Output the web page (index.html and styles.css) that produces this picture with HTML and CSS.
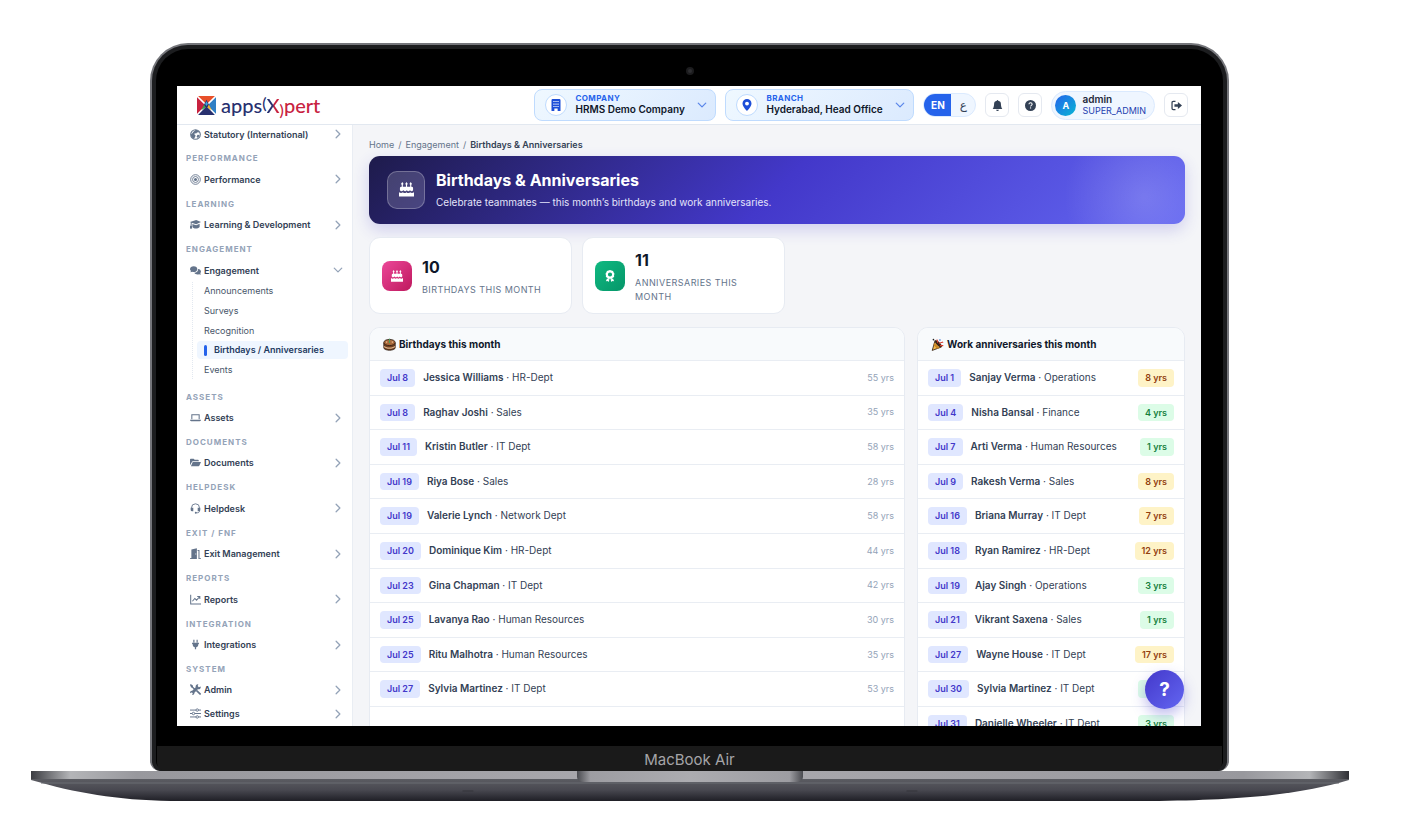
FILE: index.html
```html
<!DOCTYPE html>
<html lang="en">
<head>
    <meta charset="UTF-8">
    <meta name="viewport" content="width=device-width, initial-scale=1.0">
    <title>Birthdays &amp; Anniversaries</title>
    <link rel="stylesheet" href="styles.css">
</head>
<body>
    <svg class="sprite" aria-hidden="true">
        <symbol id="chevron" viewBox="0 0 16 16"><path d="M5 2l6 6-6 6" fill="none" stroke="currentColor" stroke-width="2" stroke-linecap="round" stroke-linejoin="round"/></symbol>
        <symbol id="cake" viewBox="0 0 16 16"><path d="M3.500 0l.9 1.400a.9.9 0 0 1-.3 1.500V5h3.300V2.900a.9.9 0 0 1-.3-1.500L8 0l.9 1.400a.9.9 0 0 1-.3 1.500V5h3.300V2.900a.9.9 0 0 1-.3-1.500l.9-1.400.9 1.400a.9.9 0 0 1-.3 1.500V5h.400a1.500 1.500 0 0 1 1.500 1.500v2.300c-1 1.400-2 1.400-3.300 0-1.200 1.400-2.200 1.400-3.400 0-1.200 1.400-2.200 1.400-3.500 0C3 10.200 2 10.200 1 8.800V6.500A1.500 1.500 0 0 1 2.500 5h.400V2.900a.9.9 0 0 1-.3-1.500z"/><path d="M0 15.500v-4.700c1.500 1.200 3 1.100 4.200 0 1.300 1.200 2.500 1.200 3.800 0 1.300 1.200 2.500 1.200 3.800 0 1.200 1.100 2.700 1.200 4.200 0v4.700z"/></symbol>
        <symbol id="award" viewBox="0 0 16 16"><path fill-rule="evenodd" d="M8 0l2 .8 2.100.5.8 2L14 5l-.6 2 .1 2.200-1.900 1.100L10.200 12 8 11.800 5.800 12l-1.400-1.700-1.900-1.100.1-2.200L2 5l1.100-1.700.8-2L6 .8zm0 3.200a2.800 2.800 0 1 0 0 5.600 2.800 2.800 0 0 0 0-5.600z"/><path d="M4 11.200L2.500 15l2.200-.3L6 16l1.400-3.200zM12 11.200l1.500 3.800-2.200-.3L10 16l-1.400-3.200z"/></symbol>
        <symbol id="globe" viewBox="0 0 16 16"><circle cx="8" cy="8" r="7" fill="none" stroke="currentColor" stroke-width="1.600"/><path d="M8 1.500c2-.3 4 .8 5.200 2.200L12 5.500l-1.500-.6L9 6.500l-2-.3-.8 1.600L8 9l-.5 2.500L5.500 14C3 13 1.300 11 1.300 8L3 6.500 5 4zM11 8.500l3 .2-1.500 3.300-2 .8-.9-2z"/></symbol>
        <symbol id="target" viewBox="0 0 16 16"><g fill="none" stroke="currentColor" stroke-width="1.300"><circle cx="8" cy="8" r="7"/><circle cx="8" cy="8" r="4.300"/></g><circle cx="8" cy="8" r="2.200"/></symbol>
        <symbol id="mortarboard" viewBox="0 0 16 16"><path d="M9 1.500l7 3-7 3.200-6.500-2.300-.2 4.600H.8L1.200 5 0 4.500z"/><path d="M3.500 7.200L9 9.200l5-2.300v4.600c-3 3-8 3-10.500 0z"/><path d="M0 10h3v4H0z"/></symbol>
        <symbol id="chat" viewBox="0 0 18 16"><path d="M6 1c3.500 0 6 2.200 6 4.800S9.500 10.500 6 10.500c-.8 0-1.600-.1-2.300-.4L.8 11l.8-2.500A4.300 4.300 0 0 1 0 5.800C0 3.200 2.500 1 6 1z"/><path d="M13.200 5.500c2.800.2 4.800 2 4.800 4.300 0 1-.4 1.900-1.100 2.600l.8 2.600-2.900-.9c-3 1-6.600 0-7.800-2.400 3.800.1 6.500-2.600 6.200-6.200z"/></symbol>
        <symbol id="laptop" viewBox="0 0 18 16"><path d="M3 11V3.500h12V11" fill="none" stroke="currentColor" stroke-width="1.700"/><path d="M0 11.800h18c0 1.400-.8 2.200-2 2.200H2c-1.200 0-2-.8-2-2.200z"/></symbol>
        <symbol id="folder" viewBox="0 0 18 16"><path d="M0 12.500V3.200C0 2.400.6 2 1.200 2H6l1.600 1.700H13c.9 0 1.400.5 1.400 1.300v1H4.600c-.7 0-1.200.4-1.500 1z"/><path d="M4.500 7H18l-2.800 6.200c-.2.500-.6.800-1.200.8H1.500z"/></symbol>
        <symbol id="headset" viewBox="0 0 16 16"><path d="M2.200 9V7a5.800 5.800 0 0 1 11.600 0v4.500c0 1.700-1.200 2.700-2.800 2.700H8.500" fill="none" stroke="currentColor" stroke-width="1.300"/><path d="M1 7h3.800v5H3a2 2 0 0 1-2-2zM11.200 7H15v3a2 2 0 0 1-2 2h-1.800z"/><circle cx="8.300" cy="14.200" r="1.300"/></symbol>
        <symbol id="door" viewBox="0 0 16 16"><path fill-rule="evenodd" d="M2 2l8-1.800V16H1v-1.200h1zm5.800 6v1.500H9V8z"/><path d="M11 3h2.800v11.800H16V16h-3.700V4.300H11z"/><path d="M0 14.800h3V16H0z"/></symbol>
        <symbol id="graph" viewBox="0 0 16 16"><path d="M1 1v13.500h15M3.500 10.500L7 6.500l2.500 2.500L14 4M10.500 3.500h3.800v3.800" fill="none" stroke="currentColor" stroke-width="1.500"/></symbol>
        <symbol id="plug" viewBox="0 0 16 16"><path d="M4.800 1h1.700v4H4.800zM9.500 1h1.700v4H9.500zM3 5.500h10v1.600h-.8c0 2.600-1.200 4.500-3.300 5V15H7.100v-2.900c-2.100-.5-3.300-2.400-3.300-5H3z"/></symbol>
        <symbol id="tools" viewBox="0 0 16 16"><path d="M1 0l3.200 2.200.2 1.800 3.100 3L6 8.500 3 5.500 1.700 5 0 1.500zM10 8.500l5.500 5a1.300 1.300 0 0 1-1.800 1.900L8.500 10z"/><path d="M15.500 3.800l-2.700.8-1.600-1.600.9-2.700C9.500-.3 7.600 2 8.300 4.600L3.200 9.800C1.200 9.500-.3 11.200.1 13.300l1.700-1 1.800.5.400 1.700-1.300 1.300c2.300.5 4-1.200 3.700-3.200l5-5c2.600.8 4.800-1.200 4.100-3.800z"/></symbol>
        <symbol id="sliders" viewBox="0 0 16 16"><path d="M0 3h16M0 8h16M0 13h16" stroke="currentColor" stroke-width="1.400"/><g fill="#fff" stroke="currentColor" stroke-width="1.300"><circle cx="10.500" cy="3" r="1.800"/><circle cx="5" cy="8" r="1.800"/><circle cx="10.500" cy="13" r="1.800"/></g></symbol>
        <symbol id="building" viewBox="0 0 16 16"><path fill-rule="evenodd" d="M3.500 0h9A1.500 1.500 0 0 1 14 1.500V16h-3.800v-3.500H5.800V16H2V1.500A1.500 1.500 0 0 1 3.500 0zM4.500 2.500v1.600h1.600V2.500zm2.700 0v1.600h1.600V2.500zm2.700 0v1.600h1.600V2.500zM4.500 6v1.600h1.600V6zm2.700 0v1.600h1.600V6zm2.700 0v1.600h1.600V6zM4.500 9.300v1.500h1.600V9.300zm2.700 0v1.500h1.600V9.300zm2.700 0v1.500h1.600V9.300z"/></symbol>
        <symbol id="pin" viewBox="0 0 16 16"><path fill-rule="evenodd" d="M8 16s6-5.700 6-10A6 6 0 0 0 2 6c0 4.300 6 10 6 10zM8 8.700a2.600 2.600 0 1 1 0-5.200 2.600 2.600 0 0 1 0 5.200z"/></symbol>
        <symbol id="bell" viewBox="0 0 16 16"><path d="M8 16a2 2 0 0 0 2-2H6a2 2 0 0 0 2 2zM9 1.100a1 1 0 1 0-2 0A5 5 0 0 0 3 6c0 1.100-.5 5.500-2 7h14c-1.500-1.500-2-5.900-2-7a5 5 0 0 0-4-4.900z"/></symbol>
        <symbol id="help" viewBox="0 0 16 16"><circle cx="8" cy="8" r="8"/><path d="M5.800 6.200c0-1.400 1-2.200 2.300-2.200s2.300.8 2.300 2c0 1.700-2.200 1.700-2.200 3.300" fill="none" stroke="#fff" stroke-width="1.500"/><circle cx="8.100" cy="11.500" r="1" fill="#fff"/></symbol>
        <symbol id="logout" viewBox="0 0 16 16"><path d="M6.500 2H3.200C2 2 1.500 2.600 1.500 3.600v8.800c0 1 .5 1.600 1.700 1.600h3.300" fill="none" stroke="currentColor" stroke-width="1.800"/><path d="M5 6.300h5V2.800L16 8l-6 5.200V9.700H5z"/></symbol>
    </svg>

    <div class="laptop">
        <div class="lid">
            <span class="camera"></span>
            <div class="screen">
                <header class="topbar">
                    <a class="brand" href="#" aria-label="apps(X)pert">
                        <svg class="brand-mark" viewBox="0 0 20 20" aria-hidden="true">
                            <path d="M1 0h18l-9 9z" fill="#e8502a"/>
                            <path d="M0 1l9 9-9 9z" fill="#c8223f"/>
                            <path d="M20 1v18l-9-9z" fill="#2f7fc4"/>
                            <path d="M10 10l9 10H1z" fill="#28306f"/>
                            <path d="M0 0l20 20M20 0L0 20" stroke="#fff" stroke-width="1.200"/>
                            <path d="M10 4l3 6-3 3-3-3z" fill="#28306f"/>
                            <path d="M10 5.500l1.500 3-1.500 2-1.500-2z" fill="#3ba7dd"/>
                            <path d="M7.500 9l1.500 3-4.500 3z" fill="#35a352"/>
                            <path d="M12.500 9L11 12l4.500 3z" fill="#f3b229"/>
                        </svg>
                        <span class="brand-name">apps<span class="paren-up">(</span><span class="brand-x">X</span><span class="paren-down">)</span><span class="brand-red">pert</span></span>
                    </a>
                    <div class="tools">
                        <div class="picker">
                            <span class="picker-icon"><svg><use href="#building"/></svg></span>
                            <div class="picker-text">
                                <label for="company">Company</label>
                                <select id="company"><option>HRMS Demo Company</option></select>
                            </div>
                            <svg class="picker-arrow"><use href="#chevron"/></svg>
                        </div>
                        <div class="picker">
                            <span class="picker-icon"><svg><use href="#pin"/></svg></span>
                            <div class="picker-text">
                                <label for="branch">Branch</label>
                                <select id="branch"><option>Hyderabad, Head Office</option></select>
                            </div>
                            <svg class="picker-arrow"><use href="#chevron"/></svg>
                        </div>
                        <div class="lang">
                            <button class="active" type="button">EN</button>
                            <button class="arabic" type="button" lang="ar">ع</button>
                        </div>
                        <button class="icon-btn" type="button" aria-label="Notifications"><svg><use href="#bell"/></svg></button>
                        <button class="icon-btn" type="button" aria-label="Help"><svg><use href="#help"/></svg></button>
                        <button class="user" type="button">
                            <span class="avatar">A</span>
                            <span class="user-text"><strong>admin</strong><span>SUPER_ADMIN</span></span>
                        </button>
                        <button class="icon-btn" type="button" aria-label="Log out"><svg><use href="#logout"/></svg></button>
                    </div>
                </header>

                <div class="layout">
                    <nav class="sidebar">
                        <a class="nav-item" href="#"><svg class="nav-icon"><use href="#globe"/></svg>Statutory (International)<svg class="arrow"><use href="#chevron"/></svg></a>
                        <section>
                            <h2>Performance</h2>
                            <a class="nav-item" href="#"><svg class="nav-icon"><use href="#target"/></svg>Performance<svg class="arrow"><use href="#chevron"/></svg></a>
                        </section>
                        <section>
                            <h2>Learning</h2>
                            <a class="nav-item" href="#"><svg class="nav-icon"><use href="#mortarboard"/></svg>Learning &amp; Development<svg class="arrow"><use href="#chevron"/></svg></a>
                        </section>
                        <section>
                            <h2>Engagement</h2>
                            <a class="nav-item" href="#"><svg class="nav-icon"><use href="#chat"/></svg>Engagement<svg class="arrow open"><use href="#chevron"/></svg></a>
                            <div class="submenu">
                                <a href="#">Announcements</a>
                                <a href="#">Surveys</a>
                                <a href="#">Recognition</a>
                                <a class="current" href="#">Birthdays / Anniversaries</a>
                                <a href="#">Events</a>
                            </div>
                        </section>
                        <section>
                            <h2>Assets</h2>
                            <a class="nav-item" href="#"><svg class="nav-icon"><use href="#laptop"/></svg>Assets<svg class="arrow"><use href="#chevron"/></svg></a>
                        </section>
                        <section>
                            <h2>Documents</h2>
                            <a class="nav-item" href="#"><svg class="nav-icon"><use href="#folder"/></svg>Documents<svg class="arrow"><use href="#chevron"/></svg></a>
                        </section>
                        <section>
                            <h2>Helpdesk</h2>
                            <a class="nav-item" href="#"><svg class="nav-icon"><use href="#headset"/></svg>Helpdesk<svg class="arrow"><use href="#chevron"/></svg></a>
                        </section>
                        <section>
                            <h2>Exit / FNF</h2>
                            <a class="nav-item" href="#"><svg class="nav-icon"><use href="#door"/></svg>Exit Management<svg class="arrow"><use href="#chevron"/></svg></a>
                        </section>
                        <section>
                            <h2>Reports</h2>
                            <a class="nav-item" href="#"><svg class="nav-icon"><use href="#graph"/></svg>Reports<svg class="arrow"><use href="#chevron"/></svg></a>
                        </section>
                        <section>
                            <h2>Integration</h2>
                            <a class="nav-item" href="#"><svg class="nav-icon"><use href="#plug"/></svg>Integrations<svg class="arrow"><use href="#chevron"/></svg></a>
                        </section>
                        <section>
                            <h2>System</h2>
                            <a class="nav-item" href="#"><svg class="nav-icon"><use href="#tools"/></svg>Admin<svg class="arrow"><use href="#chevron"/></svg></a>
                            <a class="nav-item" href="#"><svg class="nav-icon"><use href="#sliders"/></svg>Settings<svg class="arrow"><use href="#chevron"/></svg></a>
                        </section>
                    </nav>

                    <main class="content">
                        <div class="breadcrumb"><a href="#">Home</a><span>/</span><a href="#">Engagement</a><span>/</span><strong>Birthdays &amp; Anniversaries</strong></div>
                        <div class="hero">
                            <span class="hero-icon"><svg><use href="#cake"/></svg></span>
                            <div>
                                <h1>Birthdays &amp; Anniversaries</h1>
                                <p>Celebrate teammates — this month’s birthdays and work anniversaries.</p>
                            </div>
                        </div>

                        <div class="stats">
                            <div class="stat">
                                <span class="stat-icon pink"><svg><use href="#cake"/></svg></span>
                                <div>
                                    <div class="stat-value">10</div>
                                    <div class="stat-label">Birthdays this month</div>
                                </div>
                            </div>
                            <div class="stat">
                                <span class="stat-icon green"><svg><use href="#award"/></svg></span>
                                <div>
                                    <div class="stat-value">11</div>
                                    <div class="stat-label">Anniversaries this month</div>
                                </div>
                            </div>
                        </div>

                        <div class="panels">
                            <section class="panel">
                                <h2>
                                    <svg viewBox="0 0 16 16" aria-hidden="true">
                                        <path d="M1 6v6c0 4 14 4 14 0V6z" fill="#74401f" stroke="#2b1b12"/>
                                        <path d="M1 9.500c3 3 11 3 14 0v1.500c-3 3-11 3-14 0z" fill="#d8b08a"/>
                                        <ellipse cx="8" cy="5.500" rx="7" ry="3.800" fill="#a8683a" stroke="#2b1b12"/>
                                        <path d="M7.300 1h1.400v5H7.300z" fill="#4f9a5d"/>
                                        <circle cx="4.500" cy="5" r="1" fill="#e9b98b"/><circle cx="11.500" cy="5" r="1" fill="#e9b98b"/>
                                    </svg>
                                    Birthdays this month
                                </h2>
                                <ul>
                                    <li><span class="date">Jul 8</span><span><b>Jessica Williams</b> · HR-Dept</span><span class="age">55 yrs</span></li>
                                    <li><span class="date">Jul 8</span><span><b>Raghav Joshi</b> · Sales</span><span class="age">35 yrs</span></li>
                                    <li><span class="date">Jul 11</span><span><b>Kristin Butler</b> · IT Dept</span><span class="age">58 yrs</span></li>
                                    <li><span class="date">Jul 19</span><span><b>Riya Bose</b> · Sales</span><span class="age">28 yrs</span></li>
                                    <li><span class="date">Jul 19</span><span><b>Valerie Lynch</b> · Network Dept</span><span class="age">58 yrs</span></li>
                                    <li><span class="date">Jul 20</span><span><b>Dominique Kim</b> · HR-Dept</span><span class="age">44 yrs</span></li>
                                    <li><span class="date">Jul 23</span><span><b>Gina Chapman</b> · IT Dept</span><span class="age">42 yrs</span></li>
                                    <li><span class="date">Jul 25</span><span><b>Lavanya Rao</b> · Human Resources</span><span class="age">30 yrs</span></li>
                                    <li><span class="date">Jul 25</span><span><b>Ritu Malhotra</b> · Human Resources</span><span class="age">35 yrs</span></li>
                                    <li><span class="date">Jul 27</span><span><b>Sylvia Martinez</b> · IT Dept</span><span class="age">53 yrs</span></li>
                                </ul>
                            </section>
                            <section class="panel">
                                <h2>
                                    <svg viewBox="0 0 16 16" aria-hidden="true">
                                        <path d="M5 3l8 8-11.500 4.300z" fill="#f2b84b" stroke="#2b1b12" stroke-linejoin="round"/>
                                        <path d="M4 6l6.500 6.200-2.800 1L3 8.700z" fill="#c98522"/>
                                        <ellipse cx="9" cy="7" rx="5.500" ry="2.200" transform="rotate(45 9 7)" fill="#3a2416"/>
                                        <path d="M8 6c1-2 0-3-1-4M10 7c2-2 3-1 5-2M11 9c2 0 3 1 4 0" fill="none" stroke="#d33a2c" stroke-width="1.500"/>
                                        <circle cx="11" cy="2.500" r="1" fill="#2a6ad0"/><circle cx="3" cy="2" r="1" fill="#222"/>
                                    </svg>
                                    Work anniversaries this month
                                </h2>
                                <ul>
                                    <li><span class="date">Jul 1</span><span><b>Sanjay Verma</b> · Operations</span><span class="years gold">8 yrs</span></li>
                                    <li><span class="date">Jul 4</span><span><b>Nisha Bansal</b> · Finance</span><span class="years">4 yrs</span></li>
                                    <li><span class="date">Jul 7</span><span><b>Arti Verma</b> · Human Resources</span><span class="years">1 yrs</span></li>
                                    <li><span class="date">Jul 9</span><span><b>Rakesh Verma</b> · Sales</span><span class="years gold">8 yrs</span></li>
                                    <li><span class="date">Jul 16</span><span><b>Briana Murray</b> · IT Dept</span><span class="years gold">7 yrs</span></li>
                                    <li><span class="date">Jul 18</span><span><b>Ryan Ramirez</b> · HR-Dept</span><span class="years gold">12 yrs</span></li>
                                    <li><span class="date">Jul 19</span><span><b>Ajay Singh</b> · Operations</span><span class="years">3 yrs</span></li>
                                    <li><span class="date">Jul 21</span><span><b>Vikrant Saxena</b> · Sales</span><span class="years">1 yrs</span></li>
                                    <li><span class="date">Jul 27</span><span><b>Wayne House</b> · IT Dept</span><span class="years gold">17 yrs</span></li>
                                    <li><span class="date">Jul 30</span><span><b>Sylvia Martinez</b> · IT Dept</span><span class="years">3 yrs</span></li>
                                    <li><span class="date">Jul 31</span><span><b>Danielle Wheeler</b> · IT Dept</span><span class="years">3 yrs</span></li>
                                </ul>
                            </section>
                        </div>
                    </main>
                </div>
                <button class="fab" type="button" aria-label="Help">?</button>
            </div>
            <div class="chin">MacBook Air</div>
        </div>
        <svg class="base" viewBox="0 0 1318 30" preserveAspectRatio="none" aria-hidden="true">
            <defs>
                <linearGradient id="deck" x1="0" x2="1" y1="0" y2="0">
                    <stop offset="0" stop-color="#3c3d42"/>
                    <stop offset=".03" stop-color="#b4b5b8"/>
                    <stop offset=".08" stop-color="#98989d"/>
                    <stop offset=".5" stop-color="#abaaaf"/>
                    <stop offset=".92" stop-color="#98989d"/>
                    <stop offset=".97" stop-color="#b4b5b8"/>
                    <stop offset="1" stop-color="#2f3035"/>
                </linearGradient>
                <linearGradient id="belly" x1="0" x2="0" y1="0" y2="1">
                    <stop offset="0" stop-color="#5b5c62"/>
                    <stop offset=".5" stop-color="#484850"/>
                    <stop offset="1" stop-color="#1f1f26"/>
                </linearGradient>
                <linearGradient id="notch" x1="0" x2="1" y1="0" y2="0">
                    <stop offset="0" stop-color="#4a4b50"/>
                    <stop offset=".06" stop-color="#9d9da2"/>
                    <stop offset=".5" stop-color="#acacb0"/>
                    <stop offset=".94" stop-color="#9d9da2"/>
                    <stop offset="1" stop-color="#4a4b50"/>
                </linearGradient>
            </defs>
            <path d="M0 8h1318v1c-45 13-95 20-200 21H140C85 29 45 22 0 9z" fill="url(#belly)"/>
            <path d="M0 0h1318v8H0z" fill="url(#deck)"/>
            <path d="M10 12h1298" stroke="#6b6c72"/>
            <path d="M546 0h226v6q0 5-8 5H554q-8 0-8-5z" fill="url(#notch)"/>
            <path d="M432 20h10M876 20h10" stroke="#34343b" stroke-linecap="round"/>
        </svg>
    </div>
</body>
</html>
```
FILE: styles.css
```css
* {
    box-sizing: border-box;
}

body {
    margin: 0;
    background: #fff;
    font-family: Inter, "Liberation Sans", sans-serif;
    font-size: 10px;
    color: #334155;
}

h1, h2, p, ul {
    margin: 0;
    padding: 0;
}

ul {
    list-style: none;
}

a {
    color: inherit;
    text-decoration: none;
}

button, select {
    font-family: inherit;
    color: inherit;
    cursor: pointer;
}

svg {
    fill: currentColor;
    flex-shrink: 0;
}

.sprite {
    display: none;
}

/* laptop */
.laptop {
    display: flex;
    flex-direction: column;
    height: 100vh;
    min-height: 500px;
    padding: 43px 53px 35px 31px;
}

.lid {
    position: relative;
    display: flex;
    flex-direction: column;
    flex: 1;
    min-height: 0;
    margin: 0 120px 0 119px;
    padding: 41px 26px 0 25px;
    background: #000;
    border: 2px solid #75767b;
    border-bottom: 0;
    border-radius: 38px 38px 10px 10px;
    box-shadow: inset 0 0 0 4px #1c1d1f;
}

.camera {
    position: absolute;
    top: 22px;
    left: 50%;
    width: 8px;
    height: 8px;
    margin-left: -4px;
    border: 2px solid #1c1c1e;
    border-radius: 50%;
    background: #2e2e31;
}

.chin {
    height: 25px;
    margin: 20px -21px 0 -20px;
    background: #1a1a1a;
    border-radius: 0 0 8px 8px;
    color: #a5a5a8;
    font-size: 15px;
    line-height: 27px;
    text-align: center;
}

.base {
    display: block;
    width: 100%;
    height: 30px;
}

.screen {
    position: relative;
    display: flex;
    flex-direction: column;
    flex: 1;
    min-height: 0;
    overflow: hidden;
    background: #f4f5f8;
}

/* top bar */
.topbar {
    display: flex;
    align-items: center;
    justify-content: space-between;
    height: 39px;
    padding: 0 13px 0 20px;
    background: #fff;
    border-bottom: 1px solid #e2e8f0;
    z-index: 1;
}

.brand {
    display: flex;
    align-items: center;
    gap: 5px;
}

.brand-mark {
    width: 19px;
    height: 19px;
}

.brand-name {
    color: #28306f;
    font-family: Lato, sans-serif;
    font-size: 20px;
    font-weight: 500;
    line-height: 24px;
}

.brand-x {
    background: linear-gradient(90deg, #28306f 45%, #c8223f 55%);
    background-clip: text;
    color: transparent;
}

.paren-up {
    vertical-align: 4px;
    font-size: 16px;
    line-height: 1;
}

.paren-down {
    vertical-align: -3px;
    font-size: 16px;
    line-height: 1;
    color: #c8223f;
}

.brand-red {
    color: #c8223f;
}

.tools {
    display: flex;
    align-items: center;
    gap: 9px;
}

.picker {
    display: flex;
    align-items: center;
    height: 32px;
    padding: 0 8px 0 10px;
    background: linear-gradient(135deg, #eff8ff, #dbeafe);
    border: 1px solid #bfdbfe;
    border-radius: 8px;
}

.picker-icon {
    display: grid;
    place-items: center;
    width: 22px;
    height: 22px;
    margin-right: 8px;
    background: #fff;
    border: 1px solid #bfdbfe;
    border-radius: 50%;
    color: #1d4ed8;
}

.picker-icon svg {
    width: 12px;
    height: 12px;
}

.picker-text {
    display: flex;
    flex-direction: column;
}

.picker label {
    color: #2563eb;
    font-size: 8px;
    font-weight: 700;
    line-height: 9px;
    letter-spacing: 0.05em;
    text-transform: uppercase;
}

.picker select {
    appearance: none;
    padding: 0;
    border: 0;
    background: none;
    color: #0f172a;
    font-size: 10px;
    font-weight: 600;
    line-height: 13px;
}

.picker-arrow {
    width: 10px;
    height: 10px;
    margin-left: 12px;
    color: #5b86ea;
    transform: rotate(90deg);
}

.lang {
    display: flex;
    height: 24px;
    overflow: hidden;
    background: #eff6ff;
    border: 1px solid #dbeafe;
    border-radius: 12px;
}

.lang button {
    width: 24px;
    padding: 0;
    border: 0;
    background: none;
    font-size: 10px;
    font-weight: 700;
}

.lang .active {
    width: 27px;
    background: #2563eb;
    color: #fff;
}

.lang .arabic {
    font-family: "DejaVu Sans", sans-serif;
    font-size: 12px;
    font-weight: 400;
}

.icon-btn {
    display: grid;
    place-items: center;
    width: 24px;
    height: 24px;
    padding: 0;
    background: #fff;
    border: 1px solid #e5e9f0;
    border-radius: 6px;
}

.icon-btn svg {
    width: 11px;
    height: 11px;
}

.user {
    display: flex;
    align-items: center;
    gap: 6px;
    height: 29px;
    padding: 0 8px 0 3px;
    background: #eff6ff;
    border: 1px solid #dbeafe;
    border-radius: 15px;
    text-align: left;
}

.avatar {
    display: grid;
    place-items: center;
    width: 21px;
    height: 21px;
    border-radius: 50%;
    background: linear-gradient(135deg, #2563eb, #06b6d4);
    color: #fff;
    font-size: 9px;
    font-weight: 700;
}

.user-text {
    display: flex;
    flex-direction: column;
    color: #1e40af;
    font-size: 9px;
    line-height: 12px;
}

.user-text strong {
    color: #1e293b;
    font-size: 10px;
    font-weight: 600;
}

/* sidebar */
.layout {
    display: flex;
    flex: 1;
    min-height: 0;
}

.sidebar {
    display: flex;
    flex-direction: column;
    justify-content: space-between;
    width: 176px;
    margin-top: -3px;
    background: #fff;
    border-right: 1px solid #e9edf3;
}

.sidebar h2 {
    padding: 1px 9px 0;
    color: #94a3b8;
    font-size: 8px;
    font-weight: 700;
    line-height: 17px;
    letter-spacing: 1px;
    text-transform: uppercase;
}

.nav-item {
    display: flex;
    align-items: center;
    height: 24px;
    padding: 0 9px 0 13px;
    font-size: 9px;
    font-weight: 600;
}

.nav-icon {
    width: 11px;
    height: 11px;
    margin-right: 3px;
    color: #64748b;
}

.arrow {
    width: 10px;
    height: 10px;
    margin-left: auto;
    color: #94a3b8;
}

.arrow.open {
    transform: rotate(90deg);
}

.submenu {
    display: flex;
    flex-direction: column;
    justify-content: space-between;
    height: 97px;
    margin: 0 4px 5px 15px;
    padding-left: 4px;
    border-left: 1px dotted #e2e8f0;
}

.submenu a {
    padding-left: 7px;
    border-radius: 4px;
    color: #475569;
    font-size: 9px;
    line-height: 18px;
}

.submenu .current {
    display: flex;
    align-items: center;
    background: #eff6ff;
    color: #1e3a5f;
    font-weight: 600;
}

.submenu .current::before {
    content: "";
    width: 3px;
    height: 11px;
    margin-right: 7px;
    border-radius: 2px;
    background: #2563eb;
}

/* content */
.content {
    flex: 1;
    min-width: 0;
    padding: 12px 16px 0;
}

.breadcrumb {
    display: flex;
    gap: 4px;
    margin-bottom: 4px;
    color: #64748b;
    font-size: 9px;
    line-height: 15px;
}

.breadcrumb strong {
    color: #334155;
    font-weight: 600;
}

.hero {
    display: flex;
    align-items: center;
    gap: 11px;
    height: 68px;
    padding: 0 18px 1px;
    color: #fff;
    background:
        radial-gradient(circle at 95% 60%, rgba(255, 255, 255, 0.16), transparent 80px),
        linear-gradient(135deg, #1e1b4b, #4338ca 50%, #6366f1);
    border-radius: 11px;
    box-shadow: 0 6px 16px rgba(67, 56, 202, 0.2);
}

.hero-icon {
    display: grid;
    place-items: center;
    width: 38px;
    height: 38px;
    background: rgba(255, 255, 255, 0.16);
    border: 1px solid rgba(255, 255, 255, 0.25);
    border-radius: 10px;
}

.hero-icon svg {
    width: 15px;
    height: 15px;
}

.hero h1 {
    font-size: 16px;
    font-weight: 700;
    line-height: 22px;
}

.hero p {
    margin-top: 3px;
    color: #e4e4fb;
    font-size: 10px;
    line-height: 16px;
}

.stats {
    display: grid;
    grid-template-columns: 203px 203px;
    gap: 10px;
    margin: 13px 0;
}

.stat {
    display: flex;
    align-items: center;
    gap: 10px;
    min-height: 77px;
    padding: 0 12px;
    background: #fff;
    border: 1px solid #e7ebf2;
    border-radius: 11px;
}

.stat-icon {
    display: grid;
    place-items: center;
    flex-shrink: 0;
    width: 30px;
    height: 30px;
    border-radius: 8px;
    color: #fff;
}

.stat-icon svg {
    width: 12px;
    height: 12px;
}

.pink {
    background: linear-gradient(135deg, #ec4899, #be185d);
}

.green {
    background: linear-gradient(135deg, #10b981, #059669);
}

.stat-value {
    color: #0f172a;
    font-size: 16px;
    font-weight: 700;
    line-height: 24px;
}

.stat-label {
    max-width: 120px;
    margin-top: 4px;
    color: #64748b;
    font-size: 9px;
    line-height: 14px;
    letter-spacing: 0.05em;
    text-transform: uppercase;
}

.panels {
    display: grid;
    grid-template-columns: 2fr 1fr;
    gap: 12px;
}

.panel {
    overflow: hidden;
    background: #fff;
    border: 1px solid #e7ebf2;
    border-radius: 11px;
}

.panel h2 {
    display: flex;
    align-items: center;
    gap: 3px;
    height: 33px;
    padding: 0 13px;
    background: #f8fafc;
    border-bottom: 1px solid #e9edf3;
    color: #0f172a;
    font-size: 10px;
    font-weight: 700;
}

.panel h2 svg {
    width: 13px;
    height: 13px;
}

.panel li {
    display: flex;
    align-items: center;
    gap: 8px;
    padding: 8px 10px;
    border-bottom: 1px solid #e9edf3;
    line-height: 1.76;
}

.panel b {
    font-weight: 600;
}

.date, .years {
    padding: 0 7px;
    border-radius: 4px;
    background: #e0e7ff;
    color: #4338ca;
    font-size: 9px;
    font-weight: 600;
    line-height: 1.95;
}

.years {
    margin-left: auto;
    background: #dcfce7;
    color: #15803d;
}

.years.gold {
    background: #fef3c7;
    color: #92400e;
}

.age {
    margin-left: auto;
    color: #94a3b8;
    font-size: 9px;
}

.fab {
    position: absolute;
    right: 17px;
    bottom: 17px;
    width: 39px;
    height: 39px;
    padding: 0;
    border: 0;
    border-radius: 50%;
    background: linear-gradient(135deg, #4338ca, #6366f1);
    box-shadow: 0 6px 14px rgba(67, 56, 202, 0.35);
    color: #fff;
    font-size: 19px;
    font-weight: 700;
}
```
